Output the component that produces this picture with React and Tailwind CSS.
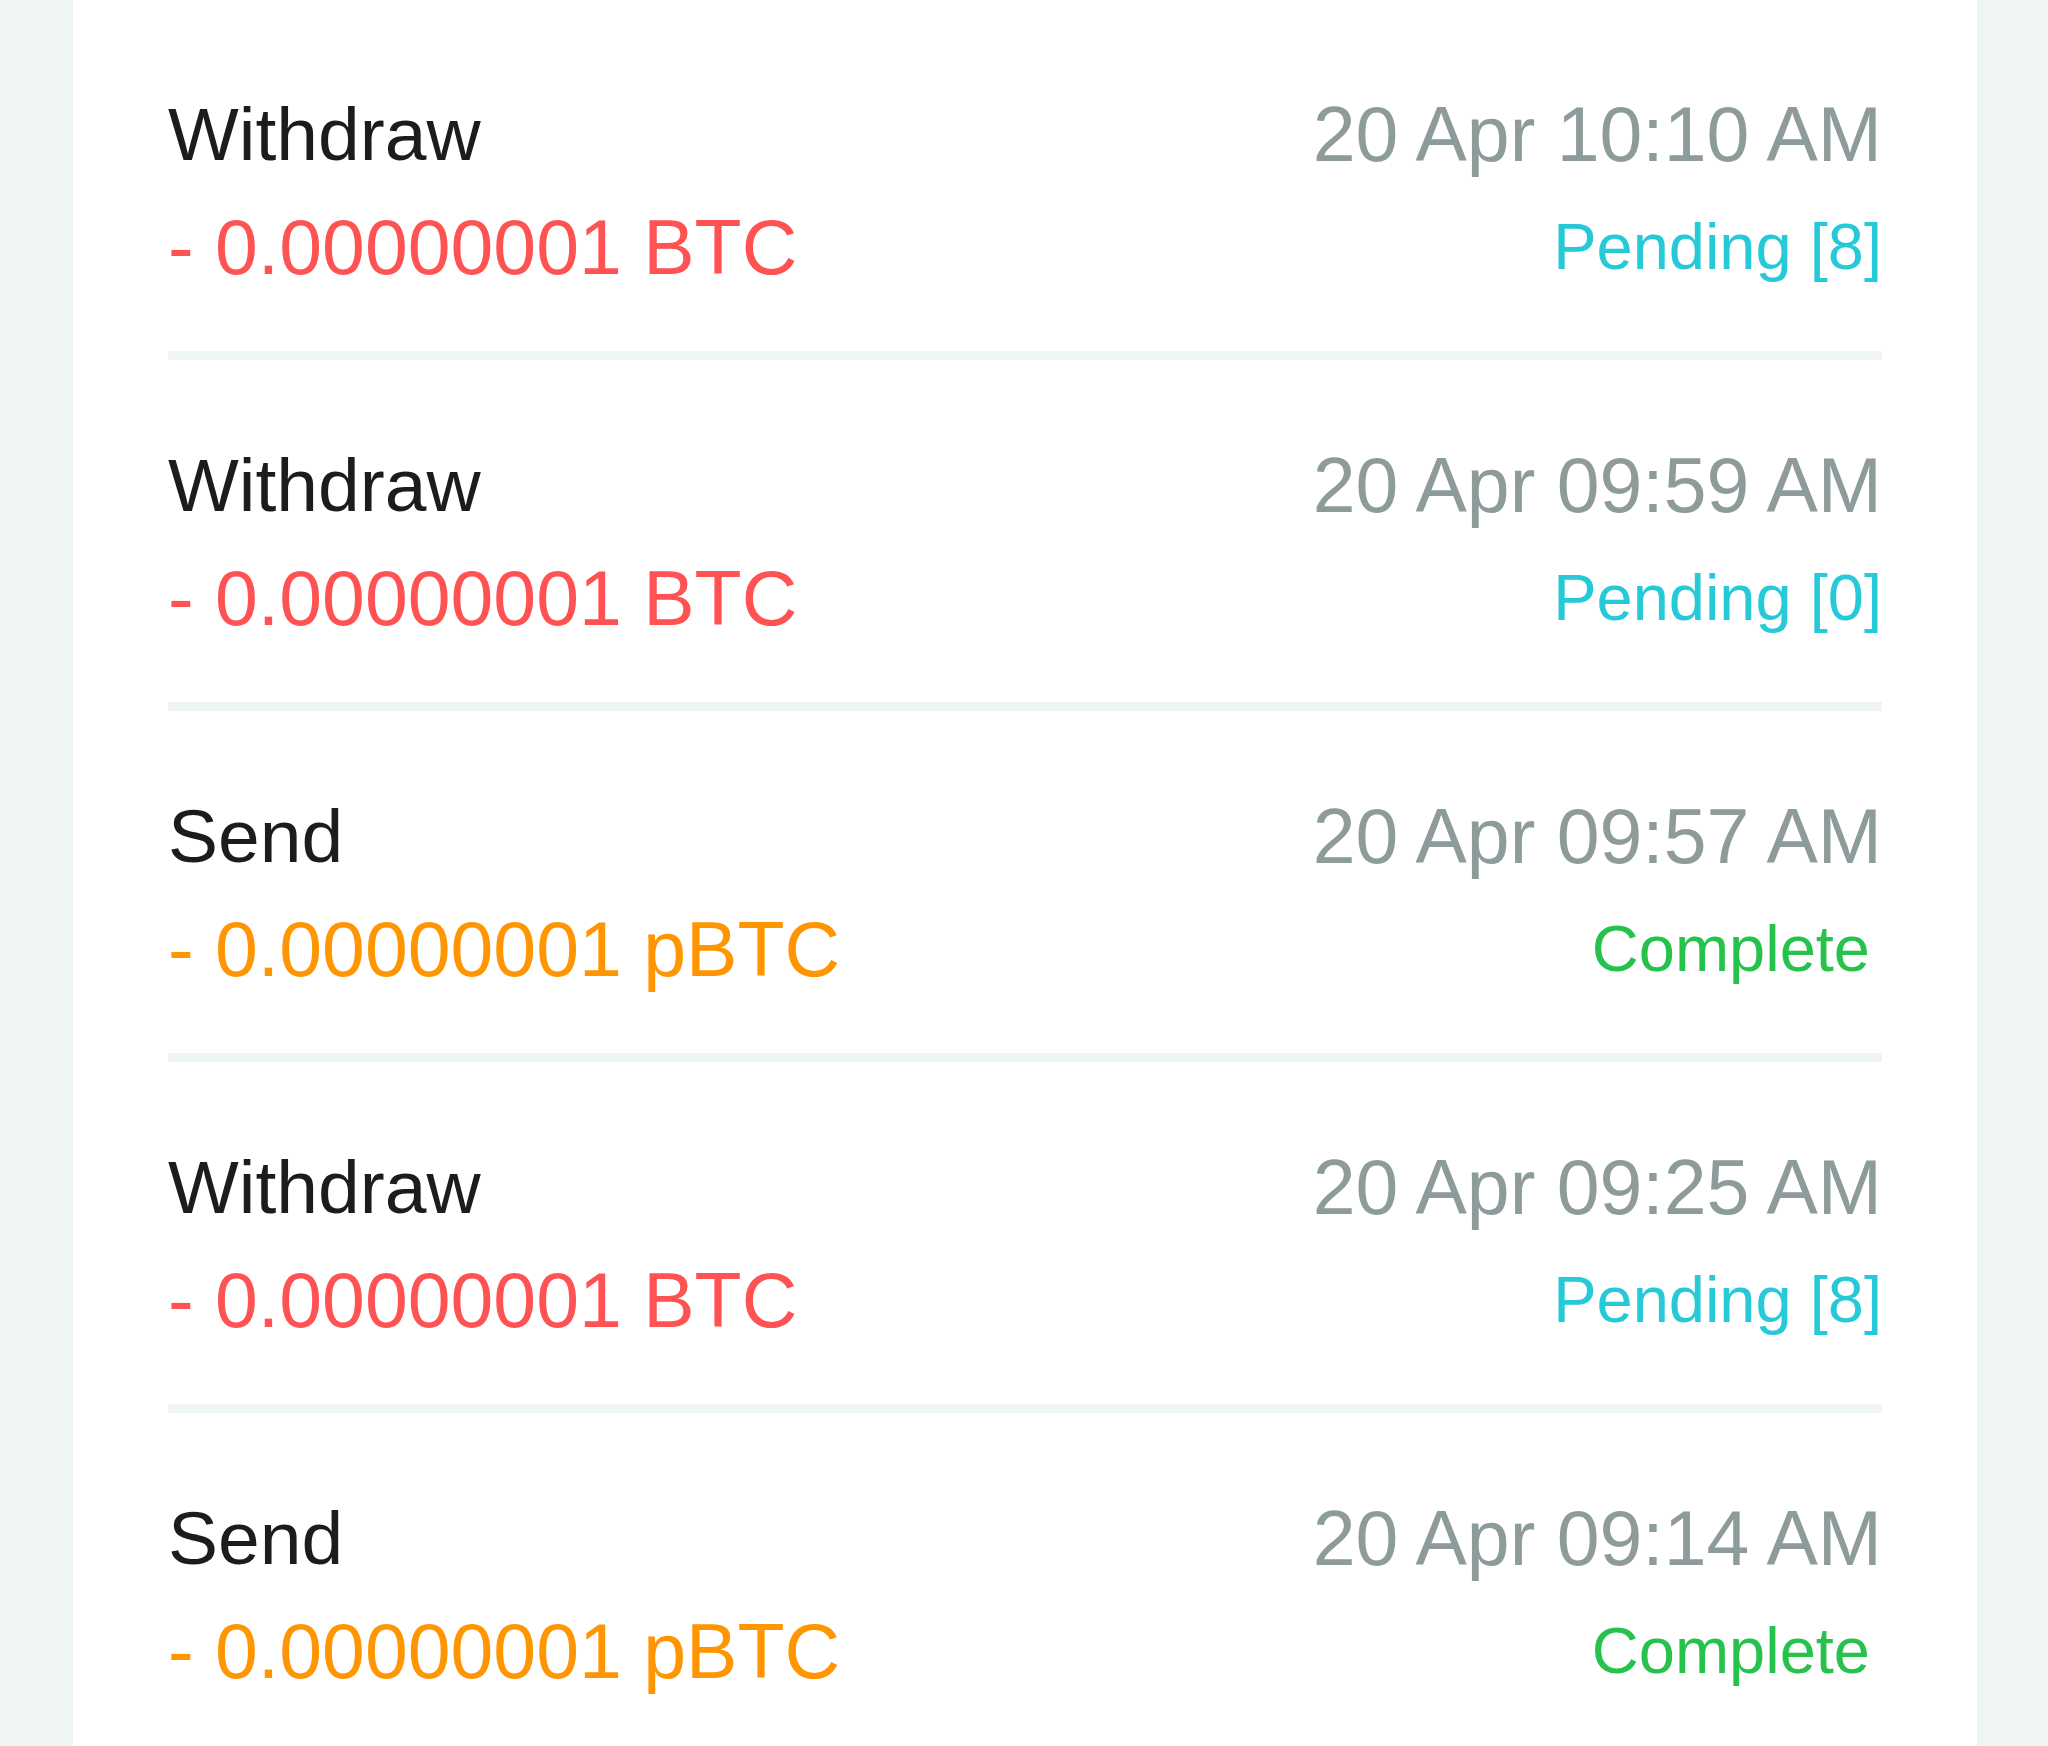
import React from 'react';

const transactions = [
  { type: 'Withdraw', amount: '- 0.00000001 BTC', token: 'btc', date: '20 Apr 10:10 AM', status: 'Pending [8]' },
  { type: 'Withdraw', amount: '- 0.00000001 BTC', token: 'btc', date: '20 Apr 09:59 AM', status: 'Pending [0]' },
  { type: 'Send', amount: '- 0.00000001 pBTC', token: 'pbtc', date: '20 Apr 09:57 AM', status: 'Complete' },
  { type: 'Withdraw', amount: '- 0.00000001 BTC', token: 'btc', date: '20 Apr 09:25 AM', status: 'Pending [8]' },
  { type: 'Send', amount: '- 0.00000001 pBTC', token: 'pbtc', date: '20 Apr 09:14 AM', status: 'Complete' }
];

const TransactionRow = ({ tx }) => {
  const isComplete = tx.status === 'Complete';

  return (
    <div className="flex h-[351px] shrink-0 justify-between border-b-[9px] border-[#eff5f5] pt-[82px]">
      <div className="flex flex-col">
        <span className="text-[75px] leading-[86px] text-[#1c1c1c]">{tx.type}</span>
        <span
          className={
            tx.token === 'pbtc'
              ? 'mt-[27px] text-[77px] leading-[86px] text-[#ff9500]'
              : 'mt-[27px] text-[77px] leading-[86px] text-[#ff5252]'
          }
        >
          {tx.amount}
        </span>
      </div>
      <div className="flex flex-col items-end">
        <span className="text-[77px] leading-[86px] text-[#8d9b9b]">{tx.date}</span>
        {isComplete ? (
          <span className="mr-[12px] mt-[33px] text-[65px] leading-[74px] text-[#27c24c]">{tx.status}</span>
        ) : (
          <span className="mt-[33px] text-[65px] leading-[74px] text-[#26c9d8]">{tx.status}</span>
        )}
      </div>
    </div>
  );
};

const App = () => {
  return (
    <div className="h-[1746px] overflow-hidden bg-[#eff5f5] pl-[73px] pr-[71px] font-['Liberation_Sans',Arial,sans-serif]">
      <div className="flex h-full flex-col bg-white px-[95px] pt-[9px]">
        {transactions.map((tx, index) => (
          <TransactionRow key={index} tx={tx} />
        ))}
      </div>
    </div>
  );
};

export default App;
